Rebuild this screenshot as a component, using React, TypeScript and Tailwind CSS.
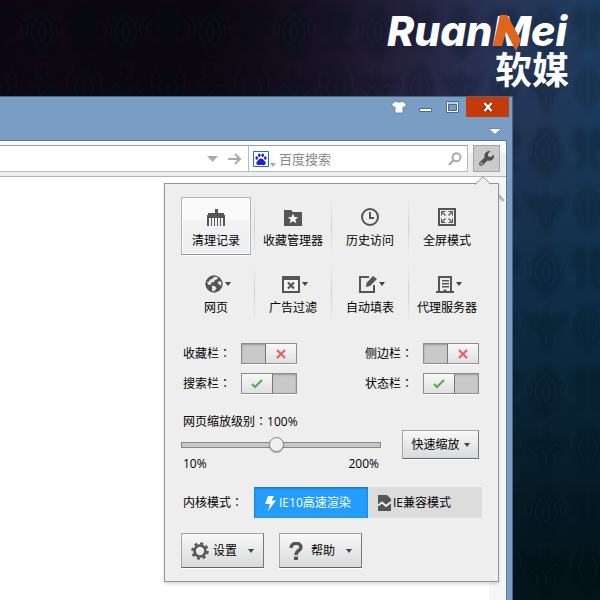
import { useState } from "react";
import type { ReactNode } from "react";

function Caret({ className = "text-[#444]" }: { className?: string }) {
  return (
    <svg width="6" height="4" viewBox="0 0 6 4" className={className} aria-hidden="true">
      <path d="M0 0h6L3 4z" fill="currentColor" />
    </svg>
  );
}

// the TC face centres the full-width colon in its cell
function Colon() {
  return <span className="font-['Noto_Sans_CJK_TC',sans-serif]">：</span>;
}

function Icon({ children }: { children: ReactNode }) {
  return (
    <svg width="18" height="18" viewBox="0 0 18 18" fill="none" className="text-[#555]" aria-hidden="true">
      {children}
    </svg>
  );
}

const BroomIcon = () => (
  <Icon>
    <g fill="currentColor">
      <path d="M8 1h3v4H8zM1 5h16v2H1zM0 7h18v3H0z" />
      <path d="M0 10h2v8H0zM4 10h1v8H4zM7 10h1v8H7zM10 10h1v8h-1zM13 10h1v8h-1zM16 10h2v8h-2z" />
    </g>
  </Icon>
);

const FolderIcon = () => (
  <Icon>
    <path d="M0 2h7l2 2h9v14H0z" fill="currentColor" />
    <path d="M9 5.500l1.500 3.400 3.700.3-2.800 2.400.9 3.600L9 13.300l-3.300 1.900.9-3.600-2.800-2.400 3.700-.3z" fill="#f4f4f4" />
  </Icon>
);

const ClockIcon = () => (
  <Icon>
    <circle cx="9" cy="9" r="8" stroke="currentColor" strokeWidth="2" />
    <path d="M9 4v6h4" stroke="currentColor" strokeWidth="2" />
  </Icon>
);

const FullscreenIcon = () => (
  <Icon>
    <path d="M1 1h16v16H1z" stroke="currentColor" strokeWidth="2" />
    <path d="M4 4l3.500 3.500M14 4l-3.500 3.500M4 14l3.500-3.500M14 14l-3.500-3.500" stroke="currentColor" strokeWidth="1.200" />
    <path d="M3.500 7.500v-4h4M10.500 3.500h4v4M14.500 10.500v4h-4M7.500 14.500h-4v-4" stroke="currentColor" />
  </Icon>
);

const GlobeIcon = () => (
  <Icon>
    <circle cx="9" cy="9" r="8.500" fill="currentColor" />
    <path d="M9.500 1.500l3.500.5-1 2.500-2 .5-1 2-2.500.5L6 9.500l-2.500.5-1.500-3 2-.5L5 4.500l2-.5zM14 6l3 1-.5 4-2.500-1.500-1.500-1.500zM7 10.500l3.500 1 1 2-2.500 3-2-.5z" fill="#e6e6e6" />
    <circle cx="9" cy="9" r="8" stroke="currentColor" />
  </Icon>
);

const FilterIcon = () => (
  <Icon>
    <path d="M0 1h18v17H0z" fill="currentColor" />
    <path d="M2 5h14v11H2z" fill="#f4f4f4" />
    <path d="M6 7.500l6 6M12 7.500l-6 6" stroke="currentColor" strokeWidth="2.200" />
  </Icon>
);

const FormIcon = () => (
  <Icon>
    <path d="M10 2H1v15h14v-7" stroke="currentColor" strokeWidth="2" />
    <path d="M7 12l.5-4L14 1l4 3-7 7z" fill="currentColor" />
  </Icon>
);

const ServerIcon = () => (
  <Icon>
    <path d="M3 16V2h12v14" stroke="currentColor" strokeWidth="2" />
    <path d="M6 5h7v1.500H6zM6 8h7v1.500H6zM6 11h7v1.500H6zM0 16h7l2-2 2 2h7v2H0z" fill="currentColor" />
  </Icon>
);

const tiles = [
  [
    { label: "清理记录", icon: <BroomIcon />, menu: false },
    { label: "收藏管理器", icon: <FolderIcon />, menu: false },
    { label: "历史访问", icon: <ClockIcon />, menu: false },
    { label: "全屏模式", icon: <FullscreenIcon />, menu: false },
  ],
  [
    { label: "网页", icon: <GlobeIcon />, menu: true },
    { label: "广告过滤", icon: <FilterIcon />, menu: true },
    { label: "自动填表", icon: <FormIcon />, menu: true },
    { label: "代理服务器", icon: <ServerIcon />, menu: true },
  ],
];

function Tile({ label, icon, menu, active }: { label: string; icon: ReactNode; menu: boolean; active: boolean }) {
  return (
    <button
      className={`flex h-[58px] min-w-0 flex-1 flex-col items-center gap-[7px] border pt-[10px] whitespace-nowrap ${
        active
          ? "border-[#b4b4b4] border-b-[#8e8e8e] bg-linear-to-b from-[#fafafa] from-40% via-[#f2f2f2] via-40% to-[#eceef2] shadow-[0_1px_0_#fff,inset_0_0_0_1px_#fdfdfd]"
          : "border-transparent"
      }`}
    >
      <span className={`flex items-center gap-[2px] ${menu ? "pl-1" : ""}`}>
        {icon}
        {menu && <Caret />}
      </span>
      <span>{label}</span>
    </button>
  );
}

function Toggle({ id, label, initial }: { id: string; label: string; initial: boolean }) {
  const [on, setOn] = useState(initial);

  return (
    <div className="flex w-[114px] items-center justify-between">
      <label htmlFor={id}>
        {label}
        <Colon />
      </label>
      <span className={`relative flex h-[21px] w-14 border border-[#8c8c8c] bg-[#c9c9c9] shadow-[inset_0_1px_2px_#999,0_1px_0_#fff] ${on ? "" : "justify-end"}`}>
        <input
          id={id}
          type="checkbox"
          checked={on}
          onChange={(e) => setOn(e.target.checked)}
          className="absolute inset-0 z-10 cursor-pointer appearance-none"
        />
        <span
          className={`flex w-[31px] items-center justify-center bg-linear-to-b from-[#f8f8f8] to-[#dfe0e2] ${
            on ? "border-r border-[#777]" : "border-l border-[#777]"
          }`}
        >
          {on ? (
            <svg width="12" height="10" viewBox="0 0 12 10" fill="none" aria-hidden="true">
              <path d="M1 5l3 3 7-7" stroke="#4caf48" strokeWidth="2" />
            </svg>
          ) : (
            <svg width="10" height="10" viewBox="0 0 10 10" fill="none" aria-hidden="true">
              <path d="M1 1l8 8M9 1L1 9" stroke="#ee5a55" strokeWidth="2" />
            </svg>
          )}
        </span>
      </span>
    </div>
  );
}

const pushButton =
  "flex items-center border border-[#a5a5a5] border-r-[#777] border-b-[#666] bg-linear-to-b from-[#f8f8f8] to-[#d9dadc] shadow-[0_1px_0_#fff]";

function ToolsPanel() {
  const [zoom, setZoom] = useState(100);
  const [engine, setEngine] = useState("fast");

  return (
    <section className="absolute top-[6px] right-[7px] w-[335px] border border-[#949494] bg-[#eeeeee] px-4 py-[13px] shadow-[0_2px_3px_rgba(0,0,0,0.15)]">
      <svg width="16" height="9" viewBox="0 0 16 9" className="absolute -top-[8px] right-[7px]" aria-hidden="true">
        <path d="M0 9l8-8 8 8z" fill="#eee" />
        <path d="M0 8.500L8 .8l8 7.700" fill="none" stroke="#949494" />
      </svg>

      <div className="flex flex-col gap-[9px]">
        {tiles.map((row, r) => (
          <div key={r} className="flex">
            {row.map((tile, i) => (
              <div key={tile.label} className="contents">
                {i > 0 && <span className="mx-[3px] w-px bg-linear-to-b from-transparent via-[#cfcfcf] to-transparent" />}
                <Tile {...tile} active={r === 0 && i === 0} />
              </div>
            ))}
          </div>
        ))}
      </div>

      <div className="mt-[21px] flex justify-between pr-[3px] pl-[2px]">
        <div className="flex flex-col gap-[9px]">
          <Toggle id="favorites-bar" label="收藏栏" initial={false} />
          <Toggle id="search-bar" label="搜索栏" initial={true} />
        </div>
        <div className="flex flex-col gap-[9px]">
          <Toggle id="side-bar" label="侧边栏" initial={false} />
          <Toggle id="status-bar" label="状态栏" initial={true} />
        </div>
      </div>

      <div className="mt-[19px] flex items-center justify-between pr-[3px]">
        <div className="w-[200px]">
          <label htmlFor="zoom" className="block h-4 pl-[2px]">
            网页缩放级别
            <Colon />
            {zoom}%
          </label>
          <input
            id="zoom"
            type="range"
            min={10}
            max={200}
            value={zoom}
            onChange={(e) => setZoom(Number(e.target.value))}
            className="mt-2 block h-[15px] w-full appearance-none bg-transparent [&::-webkit-slider-runnable-track]:h-[6px] [&::-webkit-slider-runnable-track]:border [&::-webkit-slider-runnable-track]:border-[#888] [&::-webkit-slider-runnable-track]:bg-[#c8c8c8] [&::-webkit-slider-thumb]:-mt-[6px] [&::-webkit-slider-thumb]:size-[15px] [&::-webkit-slider-thumb]:appearance-none [&::-webkit-slider-thumb]:rounded-full [&::-webkit-slider-thumb]:border [&::-webkit-slider-thumb]:border-[#888] [&::-webkit-slider-thumb]:bg-[#f0f0f0] [&::-webkit-slider-thumb]:shadow-[0_1px_1px_rgba(0,0,0,0.3)]"
          />
          <div className="mt-1 flex h-4 justify-between px-[2px]">
            <span>10%</span>
            <span>200%</span>
          </div>
        </div>
        <button className={`${pushButton} mt-1 h-[29px] w-[77px] justify-center gap-1`}>
          快速缩放
          <Caret />
        </button>
      </div>

      <div className="mt-[15px] flex items-center justify-between pl-[2px]">
        <span>
          内核模式
          <Colon />
        </span>
        <div className="grid h-[31px] w-[228px] grid-cols-2 bg-[#dcdcdc]">
          <button
            onClick={() => setEngine("fast")}
            className={`flex items-center gap-[2px] pl-[10px] whitespace-nowrap ${
              engine === "fast" ? "bg-[#259dfd] text-white shadow-[inset_0_1px_3px_#0d6fc4]" : ""
            }`}
          >
            <svg width="13" height="16" viewBox="0 0 13 16" fill="currentColor" aria-hidden="true">
              <path d="M4 1h6L7.500 5.500H12L4 16l2-7H1z" />
            </svg>
            IE10高速渲染
          </button>
          <button
            onClick={() => setEngine("compat")}
            className={`flex items-center gap-[2px] pl-[10px] whitespace-nowrap ${
              engine === "compat" ? "bg-[#259dfd] text-white shadow-[inset_0_1px_3px_#0d6fc4]" : ""
            }`}
          >
            <svg width="13" height="16" viewBox="0 0 13 16" aria-hidden="true">
              <path d="M0 0h9l4 4v12H0z" fill="#555" />
              <path d="M0 10.500l4-3 4 3.500 5-4" fill="none" stroke="#f2f2f2" strokeWidth="1.800" />
            </svg>
            IE兼容模式
          </button>
        </div>
      </div>

      <div className="mt-[15px] flex gap-[15px]">
        <button className={`${pushButton} h-[35px] w-[83px] justify-between px-[9px]`}>
          <span className="flex items-center gap-1">
            <svg width="18" height="18" viewBox="0 0 18 18" fill="none" stroke="#555" aria-hidden="true">
              <circle cx="9" cy="9" r="5.500" strokeWidth="2.600" />
              <circle cx="9" cy="9" r="7.600" strokeWidth="2.400" strokeDasharray="3 2.970" />
            </svg>
            设置
          </span>
          <Caret />
        </button>
        <button className={`${pushButton} h-[35px] w-[83px] justify-between px-[9px]`}>
          <span className="flex items-center gap-2">
            <svg width="14" height="18" viewBox="0 0 14 18" fill="none" aria-hidden="true">
              <path d="M2 6c0-6 10-6 10-.8C12 8.500 7 8.500 7 13" stroke="#555" strokeWidth="3.400" />
              <path d="M5 14.500h4V18H5z" fill="#555" />
            </svg>
            帮助
          </span>
          <Caret />
        </button>
      </div>
    </section>
  );
}

function Wallpaper() {
  return (
    <div className="absolute inset-0 bg-linear-to-r from-[#12051a] from-0% via-[#302c50] via-65% to-[#1c3c5e]">
      <div className="absolute inset-0 bg-radial-[at_25%_0%] from-[#0c0810] from-10% to-transparent to-55%" />
      <div className="absolute inset-0 bg-linear-to-b from-transparent from-15% via-[#06283c]/70 via-50% to-[#03141a] to-95%" />
      <svg className="absolute inset-0 size-full opacity-20" aria-hidden="true">
        <defs>
          <filter id="soften">
            <feGaussianBlur stdDeviation="2.500" />
          </filter>
          <pattern id="leaves" width="84" height="120" patternUnits="userSpaceOnUse">
            <g fill="#050c14" filter="url(#soften)">
              <path d="M42 4c16 12 22 26 12 42-4 6-8 8-12 16-4-8-8-10-12-16C20 30 26 16 42 4z" />
              <path d="M0 64c12 10 18 22 10 36-3 5-7 8-10 14zM84 64c-12 10-18 22-10 36 3 5 7 8 10 14z" />
              <path d="M42 70c4 10 16 10 22 2-2 14-12 20-22 44-10-24-20-30-22-44 6 8 18 8 22-2z" />
              <path d="M10 6l8 14-10 16 4 16-12-10V10zM74 6l-8 14 10 16-4 16 12-10V10z" />
            </g>
          </pattern>
          <pattern id="curls" width="84" height="120" patternUnits="userSpaceOnUse">
            <g fill="none" stroke="#4c6c8c" strokeWidth="0.600" opacity="0.600">
              <path d="M42 14c-12 10-14 22-4 32M42 14c12 10 14 22 4 32M42 22c-5 6-5 14 0 20 5-6 5-14 0-20z" />
              <path d="M34 10c-4 4-8 4-10 10 4 0 6-2 8-4M50 10c4 4 8 4 10 10-4 0-6-2-8-4M28 26c-6 0-8 6-4 10 2-2 4-4 4-10zM56 26c6 0 8 6 4 10-2-2-4-4-4-10z" />
              <path d="M16 20c10 8 6 22-6 20M68 20c-10 8-6 22 6 20M42 62c-6 2-8 8-4 14M42 62c6 2 8 8 4 14" />
              <path d="M30 84c8 2 12 10 12 20M54 84c-8 2-12 10-12 20M26 90c6 4 8 8 8 16M58 90c-6 4-8 8-8 16" />
              <path d="M4 76c6 8 6 16 0 24M80 76c-6 8-6 16 0 24M10 70c6 4 8 10 6 18M74 70c-6 4-8 10-6 18" />
            </g>
          </pattern>
        </defs>
        <rect width="100%" height="100%" fill="url(#leaves)" />
        <rect width="100%" height="100%" fill="url(#curls)" />
      </svg>
    </div>
  );
}

function Logo() {
  return (
    <svg width="200" height="90" viewBox="0 0 200 90" role="img" aria-label="RuanMei 软媒">
      <g fill="#fff">
        <text x="1" y="40" fontSize="41" fontWeight="800" fontStyle="italic" fontFamily="Inter, sans-serif">
          RuanMei
        </text>
        <text x="109" y="78" fontSize="37" fontWeight="700" fontFamily="'Noto Sans CJK SC', sans-serif">
          软媒
        </text>
      </g>
      <path d="M114 9h7l14 25-5 11-10-19-4 14h-9z" fill="#e0641e" />
    </svg>
  );
}

const captionButton = "flex h-5 w-[27px] items-center justify-center";

export default function App() {
  return (
    <main className="relative flex min-h-screen flex-col overflow-hidden font-['Open_Sans','Noto_Sans_CJK_SC',sans-serif] text-xs leading-4 text-black">
      <Wallpaper />

      <header className="relative flex h-24 justify-end pt-[6px] pr-[14px]">
        <Logo />
      </header>

      <div className="relative mr-[87px] flex flex-1 flex-col border-t border-r border-[#4d6680] bg-[#7a9dc4]">
        <div className="h-[43px]">
          <div className="flex justify-end pr-[3px]">
            <button aria-label="Skin" className={captionButton}>
              <svg width="16" height="14" viewBox="0 0 16 14" aria-hidden="true">
                <path d="M5 1c1 1.600 5 1.600 6 0l4.500 3-2 3.500-1.500-.5v6H4V7l-1.500.5-2-3.500z" fill="#fff" stroke="#5a7899" strokeWidth="0.800" />
              </svg>
            </button>
            <button aria-label="Minimize" className={captionButton}>
              <svg width="13" height="12" viewBox="0 0 13 12" aria-hidden="true">
                <path d="M.5 7.500h12v3H.5z" fill="#fff" stroke="#4d6a90" />
              </svg>
            </button>
            <button aria-label="Maximize" className={captionButton}>
              <svg width="13" height="12" viewBox="0 0 13 12" fill="none" aria-hidden="true">
                <path d="M.5.5h12v11H.5zM2.500 3.500h8v6h-8z" stroke="#4d6a90" />
                <path d="M1.500 2h10M1.500 1v10M11.500 1v10M1 10.500h11" stroke="#fff" />
              </svg>
            </button>
            <button aria-label="Close" className="flex h-5 w-[43px] items-center justify-center bg-[#c43a08]">
              <svg width="12" height="10" viewBox="0 0 12 10" fill="none" aria-hidden="true">
                <path d="M2.500 1l7 8M9.500 1l-7 8" stroke="#7a2405" strokeWidth="4" />
                <path d="M2.500 1l7 8M9.500 1l-7 8" stroke="#fff" strokeWidth="2.600" />
              </svg>
            </button>
          </div>
          <div className="flex justify-end pt-[11px] pr-[11px]">
            <button aria-label="Tabs">
              <svg width="12" height="7" viewBox="0 0 12 7" aria-hidden="true">
                <path d="M.5.500h11v1L6 6.500.5 1.500z" fill="#fff" stroke="#56749a" strokeWidth="0.800" />
              </svg>
            </button>
          </div>
        </div>

        <div className="mr-[5px] flex flex-1 flex-col border-t border-r border-[#64758f] bg-white">
          <div className="flex h-9 items-start border-b border-[#b3b4ba] bg-linear-to-b from-[#f9f9f9] from-35% to-[#eeeeee] to-35% pt-1 pr-[6px]">
            <div className="flex h-[27px] min-w-0 flex-1 items-center border-y border-t-[#9b9b9b] border-b-[#bbb] bg-white">
              <input aria-label="Address" className="h-full min-w-0 flex-1 outline-none" />
              <button aria-label="History" className="px-[10px]">
                <svg width="11" height="6" viewBox="0 0 11 6" aria-hidden="true">
                  <path d="M0 0h11L5.500 6z" fill="#aaa" />
                </svg>
              </button>
              <button aria-label="Go" className="pr-[6px]">
                <svg width="14" height="12" viewBox="0 0 14 12" fill="none" stroke="#aaa" strokeWidth="2" aria-hidden="true">
                  <path d="M0 6h12M7 1l5 5-5 5" />
                </svg>
              </button>
            </div>
            <div className="flex h-[27px] w-[220px] items-center border border-t-[#9b9b9b] border-r-[#bbb] border-b-[#bbb] border-l-[#bbb] bg-white pr-[5px] pl-1">
              <button aria-label="Search engine" className="flex items-end gap-px">
                <svg width="16" height="16" viewBox="0 0 16 16" aria-hidden="true">
                  <path d="M.5.500h15v15H.5z" fill="#fff" stroke="#1874c0" />
                  <g fill="#2319dc">
                    <ellipse cx="3.700" cy="7" rx="1.300" ry="1.700" />
                    <ellipse cx="6.300" cy="4.200" rx="1.300" ry="1.800" />
                    <ellipse cx="9.700" cy="4.200" rx="1.300" ry="1.800" />
                    <ellipse cx="12.300" cy="7" rx="1.300" ry="1.700" />
                    <path d="M8 7.500c2 0 2.500 1.700 4 3 1.500 1.500.4 3.500-1.500 3.500-1 0-1.500-.3-2.500-.3s-1.500.3-2.500.3C3.600 14 2.500 12 4 10.500c1.500-1.300 2-3 4-3z" />
                  </g>
                </svg>
                <Caret className="text-[#aaa]" />
              </button>
              <input
                aria-label="百度搜索"
                placeholder="百度搜索"
                className="ml-[3px] h-full min-w-0 flex-1 text-[13px] outline-none placeholder:text-[#888]"
              />
              <button aria-label="Search">
                <svg width="14" height="14" viewBox="0 0 14 14" fill="none" stroke="#aaa" aria-hidden="true">
                  <circle cx="8.500" cy="5.200" r="4" strokeWidth="2" />
                  <path d="M5.500 8.200L1 12.800" strokeWidth="2.200" />
                </svg>
              </button>
            </div>
            <button aria-label="Tools" className="ml-[5px] flex size-[27px] items-center justify-center border border-[#a3a3a3] bg-[#cbcbcb]">
              <svg width="17" height="17" viewBox="0 0 17 17" aria-hidden="true">
                <path
                  d="M12.600 1.100L9.800 4l.4 2.600 2.700.5 2.900-2.700c.9 3-1 6.100-4 6.300-.9.100-1.600 0-2.300-.3L4.900 15c-1 1-2.400 1-3.200.2-.8-.8-.8-2.200.2-3.100l4.700-4.500C5.500 4 8.500.2 12.600 1.100z"
                  fill="#505050"
                />
                <circle cx="3.500" cy="13.400" r="1" fill="#cbcbcb" />
              </svg>
            </button>
          </div>

          <div className="relative flex min-h-[423px] flex-1 justify-end">
            <div className="flex w-[17px] justify-center bg-[#f6f6f6] pt-4">
              <svg width="14" height="9" viewBox="0 0 14 9" fill="none" aria-hidden="true">
                <path d="M1 8l6-6 6 6" stroke="#bbb" strokeWidth="3" />
              </svg>
            </div>
            <ToolsPanel />
          </div>
        </div>
      </div>
    </main>
  );
}
